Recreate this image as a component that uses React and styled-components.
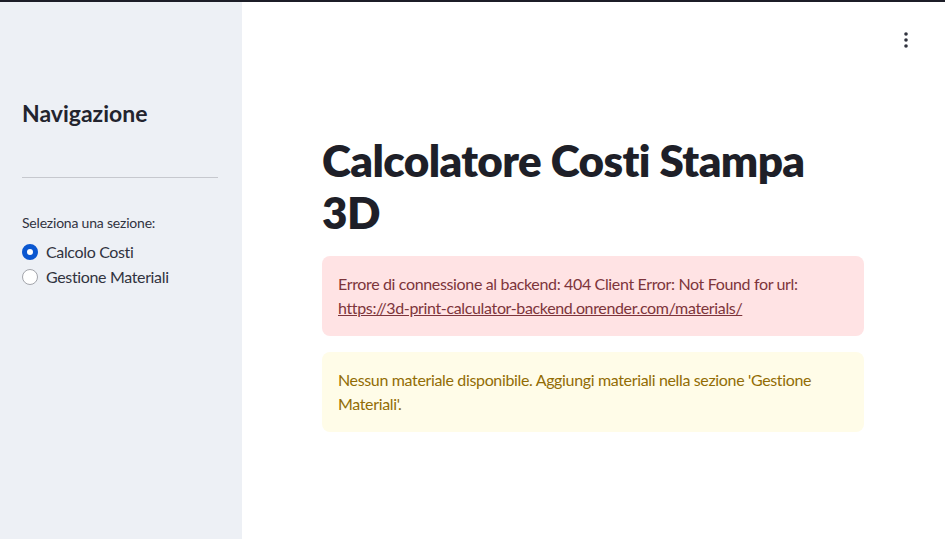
import React, { useState } from 'react';
import styled, { createGlobalStyle } from 'styled-components';

const GlobalStyle = createGlobalStyle`
  html, body { margin: 0; padding: 0; height: 100%; }
  body {
    font-family: Lato, "Noto Sans", "Liberation Sans", sans-serif;
    color: #31333f;
    background: #fff;
  }
  #root { height: 100%; }
`;

const Page = styled.div`
  display: flex;
  flex-direction: column;
  width: 945px;
  height: 539px;
  overflow: hidden;
`;

const TopLine = styled.div`
  height: 2px;
  background: #1c1d27;
  flex-shrink: 0;
`;

const Body = styled.div`
  display: flex;
  flex: 1;
  min-height: 0;
`;

const Sidebar = styled.aside`
  width: 242px;
  flex-shrink: 0;
  background: #edf0f5;
  padding: 95px 24px 0 22px;
  box-sizing: border-box;
`;

const SideTitle = styled.h2`
  margin: 0;
  font-size: 23px;
  font-weight: 700;
  color: #23242e;
  line-height: 32px;
`;

const Divider = styled.hr`
  border: none;
  border-top: 1px solid #c6c8ce;
  margin: 48px 0 36px;
`;

const RadioLabel = styled.div`
  font-size: 14px;
  color: #31333f;
  margin-bottom: 8px;
  letter-spacing: -0.2px;
`;

const RadioRow = styled.label`
  display: flex;
  align-items: center;
  gap: 8px;
  height: 25px;
  font-size: 16px;
  letter-spacing: -0.35px;
  color: #31333f;
  cursor: pointer;
`;

const Dot = styled.span`
  width: 16px;
  height: 16px;
  border-radius: 50%;
  box-sizing: border-box;
  background: #fff;
  border: ${p => (p.$on ? '5px solid #0b57d0' : '1px solid #a3a5ab')};
  flex-shrink: 0;
`;

const Main = styled.main`
  flex: 1;
  position: relative;
  padding: 132px 0 0 80px;
  box-sizing: border-box;
`;

const Menu = styled.button`
  position: absolute;
  top: 28px;
  right: 29px;
  width: 20px;
  height: 20px;
  border: none;
  background: none;
  padding: 0;
  display: flex;
  align-items: center;
  justify-content: center;
  cursor: pointer;
`;

const Content = styled.div`
  width: 542px;
`;

const Title = styled.h1`
  margin: 0 0 18px;
  font-size: 44px;
  font-weight: 800;
  line-height: 52px;
  color: #1e1f28;
  letter-spacing: -0.6px;
`;

const Alert = styled.div`
  border-radius: 8px;
  padding: 16px;
  font-size: 16px;
  line-height: 24px;
  letter-spacing: -0.35px;
  margin-bottom: 16px;
  background: ${p => (p.$kind === 'error' ? '#ffe3e4' : '#fffce8')};
  color: ${p => (p.$kind === 'error' ? '#7d353b' : '#926c05')};

  a { color: inherit; text-decoration: underline; }
`;

const sections = ['Calcolo Costi', 'Gestione Materiali'];

export default function App() {
  const [sel, setSel] = useState(0);
  return (
    <Page>
      <GlobalStyle />
      <TopLine />
      <Body>
        <Sidebar>
          <SideTitle>Navigazione</SideTitle>
          <Divider />
          <RadioLabel>Seleziona una sezione:</RadioLabel>
          {sections.map((s, i) => (
            <RadioRow key={s} onClick={() => setSel(i)}>
              <Dot $on={sel === i} />
              {s}
            </RadioRow>
          ))}
        </Sidebar>
        <Main>
          <Menu aria-label="menu">
            <svg width="4" height="16" viewBox="0 0 4 16">
              <circle cx="2" cy="2" r="1.8" fill="#31333f" />
              <circle cx="2" cy="8" r="1.8" fill="#31333f" />
              <circle cx="2" cy="14" r="1.8" fill="#31333f" />
            </svg>
          </Menu>
          <Content>
            <Title>Calcolatore Costi Stampa 3D</Title>
            <Alert $kind="error">
              Errore di connessione al backend: 404 Client Error: Not Found for url:{' '}
              <a href="#">https://3d-print-calculator-backend.onrender.com/materials/</a>
            </Alert>
            <Alert $kind="warning">
              Nessun materiale disponibile. Aggiungi materiali nella sezione 'Gestione Materiali'.
            </Alert>
          </Content>
        </Main>
      </Body>
    </Page>
  );
}
